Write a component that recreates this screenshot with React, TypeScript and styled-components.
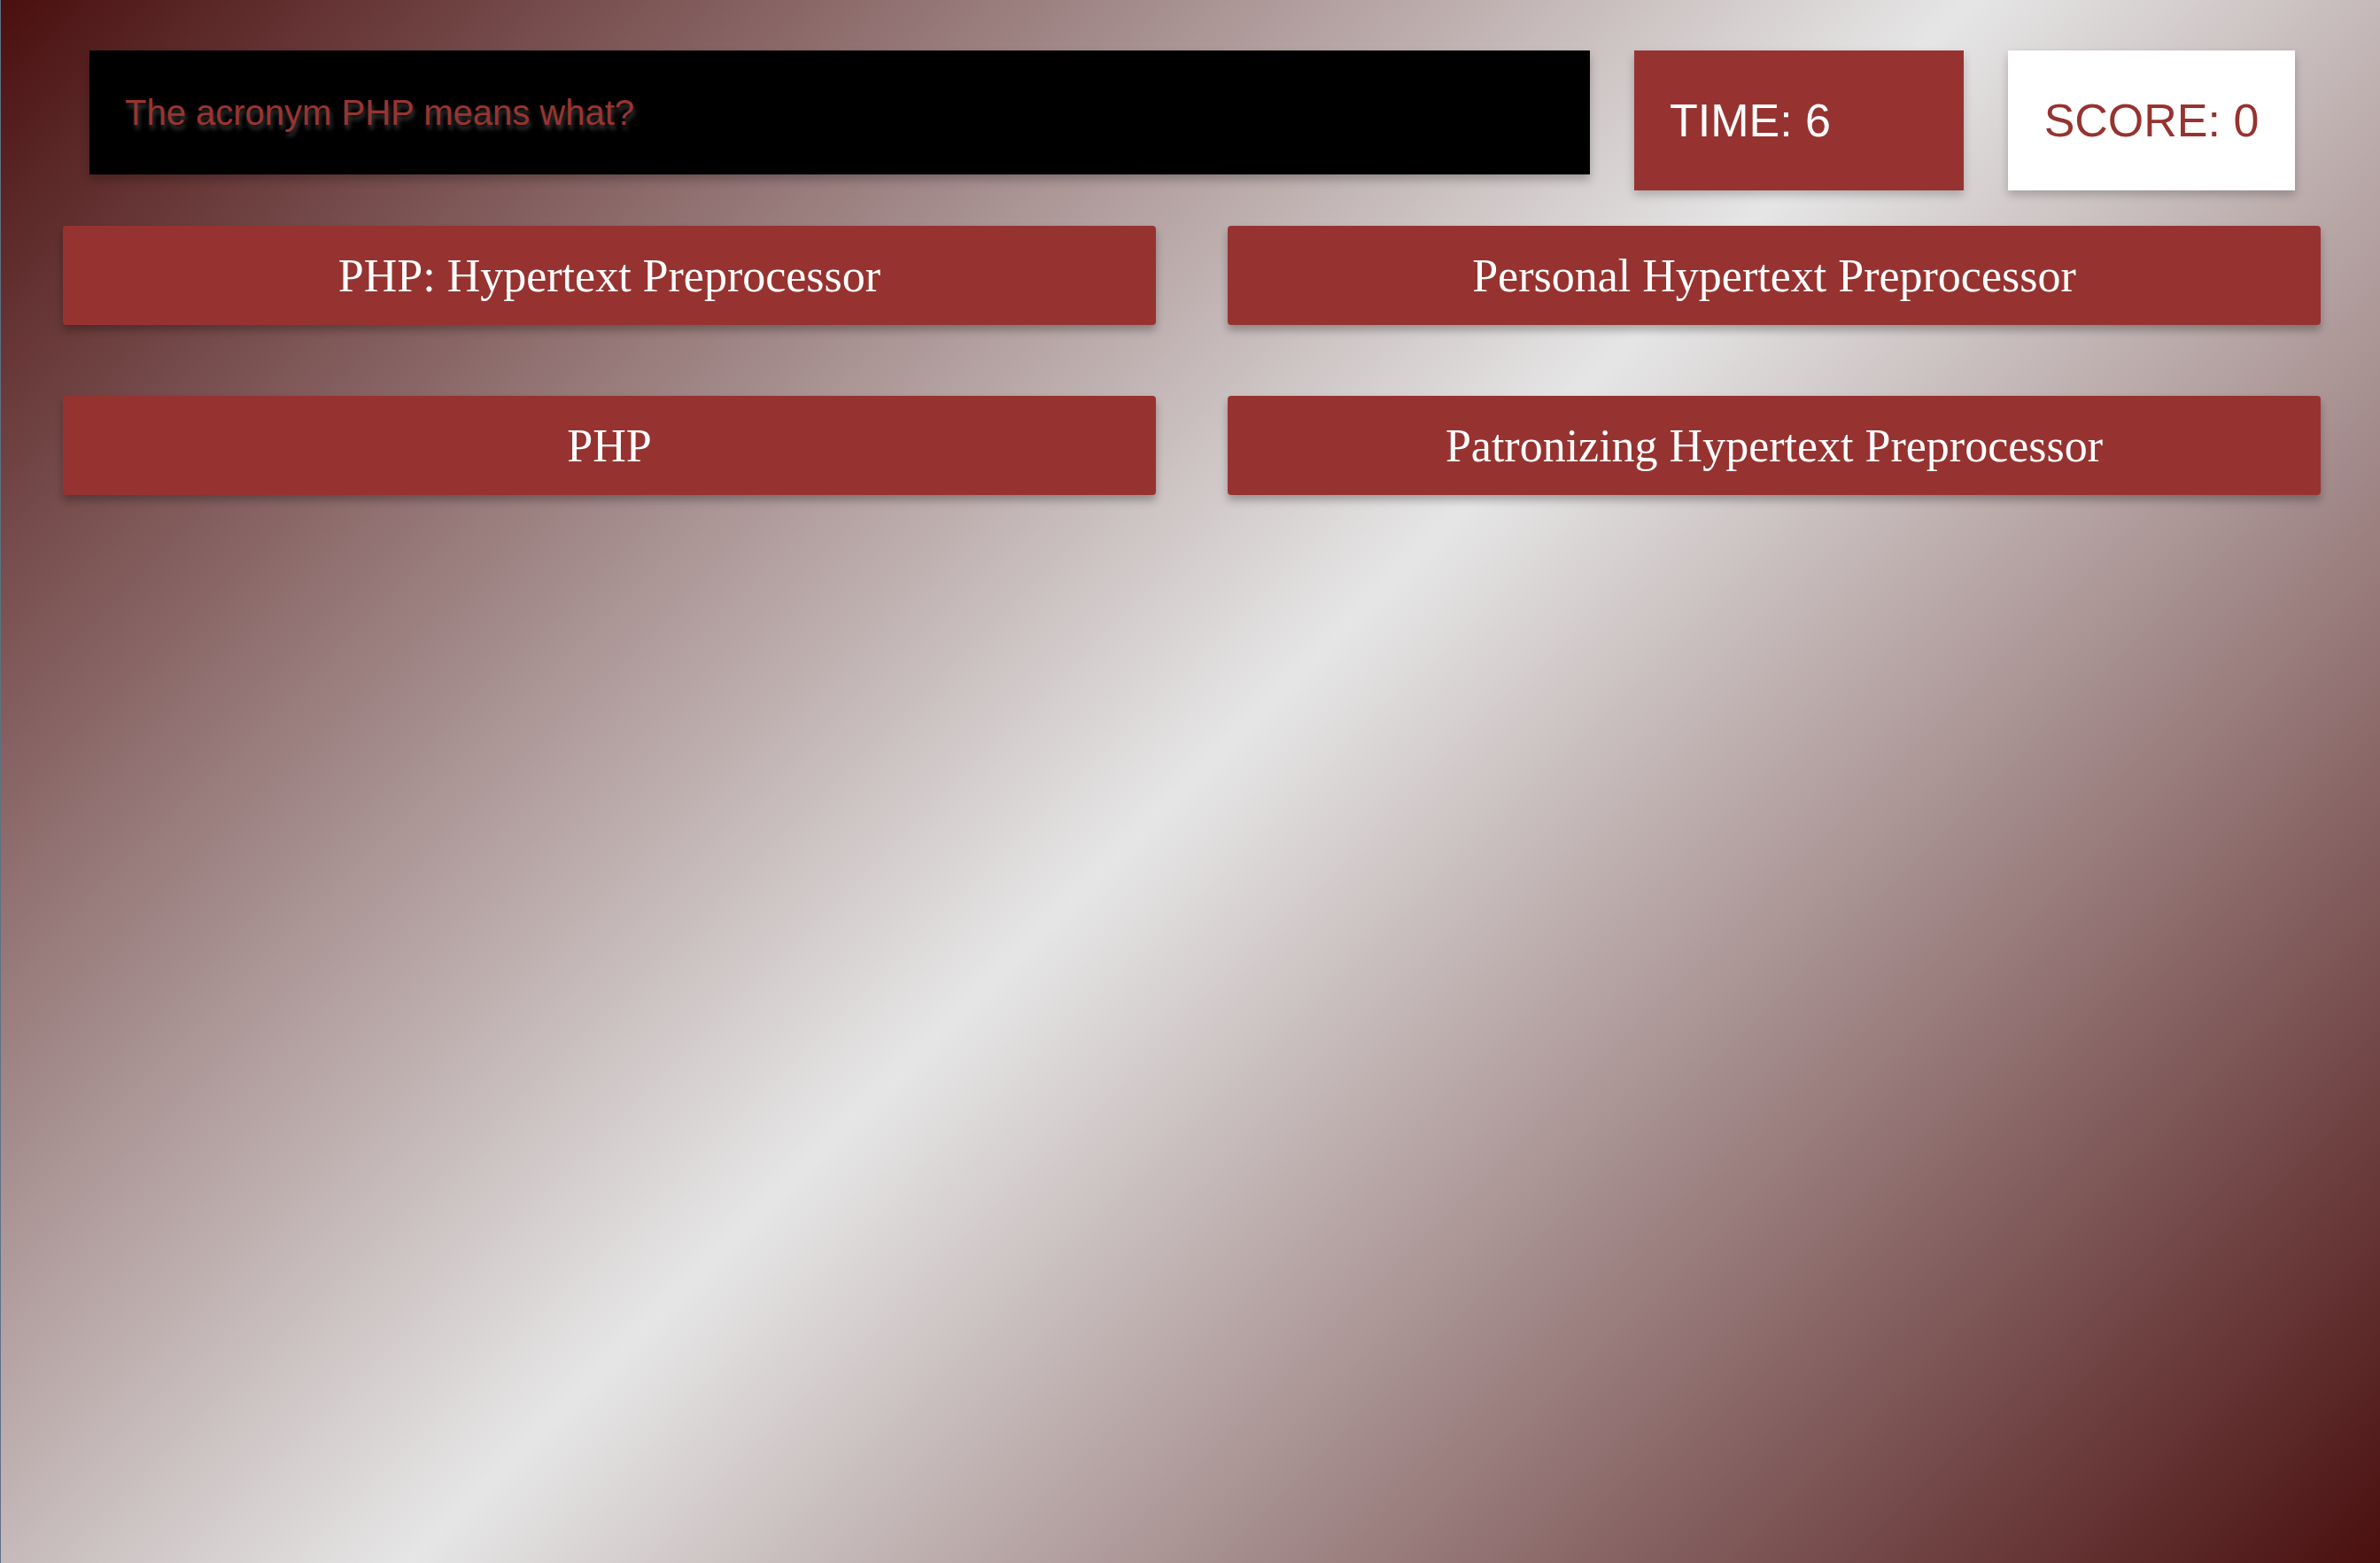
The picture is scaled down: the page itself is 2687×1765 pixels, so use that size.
import React from "react";
import styled, { createGlobalStyle } from "styled-components";

const GlobalStyle = createGlobalStyle`
  html, body {
    margin: 0;
    padding: 0;
  }
  body {
    font-family: "Liberation Sans", Arial, sans-serif;
    background: linear-gradient(135deg, #4a0f0f 0%, #e6e6e6 50%, #4a0f0f 100%);
    background-attachment: fixed;
    min-height: 100vh;
  }
`;

const Page = styled.div`
  min-height: 1765px;
  box-sizing: border-box;
  border-left: 1px solid #5c7283;
  background: linear-gradient(135deg, #4a0f0f 0%, #e6e6e6 50%, #4a0f0f 100%);
`;

const Header = styled.header`
  display: flex;
  align-items: flex-start;
  gap: 50px;
  padding: 57px 96px 0 100px;
`;

const Question = styled.div`
  flex: 1;
  height: 140px;
  box-sizing: border-box;
  display: flex;
  align-items: center;
  padding-left: 40px;
  background: #000;
  box-shadow: 0 6px 10px rgba(0, 0, 0, 0.25);
  color: #9a3430;
  font-family: "Liberation Sans", Arial, sans-serif;
  font-size: 40px;
  text-shadow: 2px 5px 5px #3c3c3c;
`;

const StatBox = styled.div<{ $variant: "time" | "score" }>`
  width: ${(p) => (p.$variant === "time" ? "372px" : "324px")};
  height: 158px;
  box-sizing: border-box;
  display: flex;
  align-items: center;
  justify-content: ${(p) => (p.$variant === "time" ? "flex-start" : "center")};
  padding-left: ${(p) => (p.$variant === "time" ? "40px" : "0")};
  background: ${(p) => (p.$variant === "time" ? "#963330" : "#ffffff")};
  color: ${(p) => (p.$variant === "time" ? "#ffffff" : "#963330")};
  font-family: "Liberation Sans", Arial, sans-serif;
  font-size: 52px;
  box-shadow: 0 5px 10px rgba(0, 0, 0, 0.22);
`;

const Answers = styled.main`
  display: grid;
  grid-template-columns: 1fr 1fr;
  column-gap: 81px;
  row-gap: 80px;
  padding: 40px 67px 0 70px;
`;

const AnswerButton = styled.button`
  height: 112px;
  border: none;
  border-radius: 4px;
  background: #963330;
  color: #ffffff;
  font-family: "Liberation Serif", "Times New Roman", serif;
  font-size: 52px;
  box-shadow: 0 6px 10px rgba(0, 0, 0, 0.28);
  cursor: pointer;
  padding: 0;
`;

const answers = [
  "PHP: Hypertext Preprocessor",
  "Personal Hypertext Preprocessor",
  "PHP",
  "Patronizing Hypertext Preprocessor",
];

export default function App() {
  return (
    <>
      <GlobalStyle />
      <Page>
        <Header>
          <Question>The acronym PHP means what?</Question>
          <StatBox $variant="time">TIME: 6</StatBox>
          <StatBox $variant="score">SCORE: 0</StatBox>
        </Header>
        <Answers>
          {answers.map((a) => (
            <AnswerButton key={a}>{a}</AnswerButton>
          ))}
        </Answers>
      </Page>
    </>
  );
}
